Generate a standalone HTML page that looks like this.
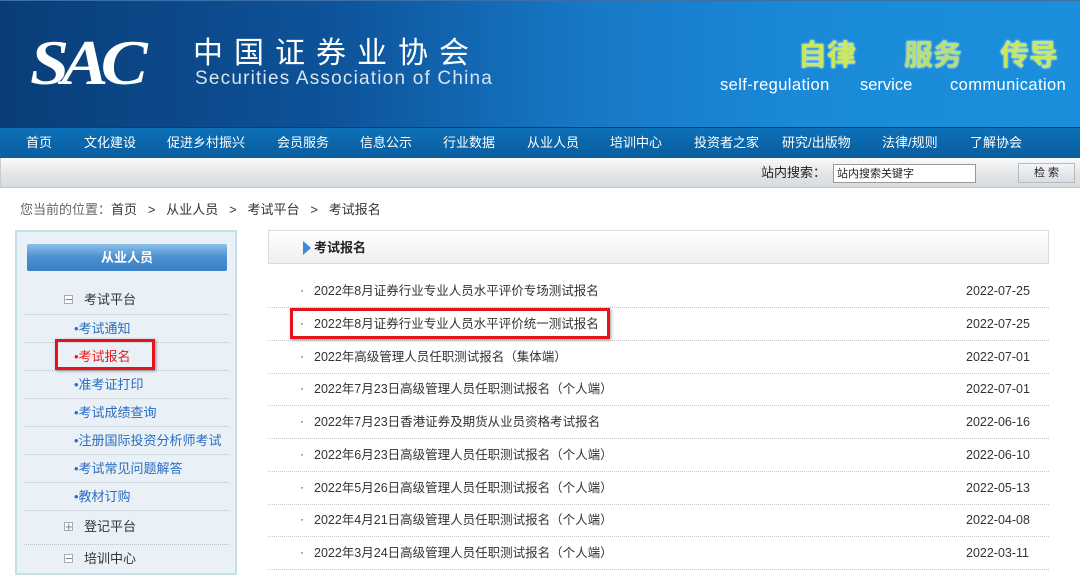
<!DOCTYPE html>
<html><head><meta charset="utf-8"><style>
*{margin:0;padding:0;box-sizing:border-box}
body{width:1080px;height:569px;overflow:hidden;background:#fff;font-family:"Liberation Sans","Noto Sans CJK SC",sans-serif;font-size:13px;color:#333;position:relative;line-height:1}
.hd{position:absolute;left:0;top:0;width:1080px;height:127px;background:linear-gradient(90deg,#0a3d78 0%,#0d5298 30%,#1779c8 55%,#1a8ad8 75%,#1b8fdc 100%);border-top:1px solid #3a6fa8}
.nav{position:absolute;left:0;top:127px;width:1080px;height:31px;background:linear-gradient(#0e70b8,#0a64a8 60%,#0b5fa0);border-top:1px solid #133c66}
.nav span{position:absolute;top:8px;color:#fff;font-size:13px}
.sb{position:absolute;left:0;top:158px;width:1080px;height:30px;background:linear-gradient(#fbfbfb,#e4e6e8 50%,#d9dcdf);border-bottom:1px solid #c0c4c8;border-left:1px solid #ccc}
.abs{position:absolute}
.side{position:absolute;left:15px;top:230px;width:222px;height:345px;background:#eaf1f6;border:2px solid #c5dfe9}
.side .btn{position:absolute;left:10px;top:12px;width:200px;height:27px;background:linear-gradient(#8cc0ea,#4a8fd0 50%,#3a80c4);border-radius:2px;color:#fff;font-weight:bold;text-align:center;line-height:27px;font-size:13px}
.row{position:absolute;left:7px;width:205px;border-bottom:1px dotted #b8c2c8;height:28px}
.row span{position:absolute;top:7px;font-size:13px}
.lk{color:#2a6cc0}
.pm{position:absolute;width:9px;height:9px;border:1px solid #aab;font-size:8px;line-height:7px;text-align:center;color:#777;background:#fff}
.ct{position:absolute;left:268px;top:230px;width:781px;height:34px;background:linear-gradient(#fff,#eef0f1);border:1px solid #dcdcdc}
.li{position:absolute;left:268px;width:781px;height:33px;border-bottom:1px dotted #c8c8c8}
.li .t{position:absolute;left:46px;top:10px;font-size:12.5px;color:#333;line-height:13px}
.li .d{position:absolute;left:698px;top:10px;font-size:12.5px;color:#333;line-height:13px}
.li .b{position:absolute;left:32px;top:9px;font-size:12px;line-height:13px}
.red{position:absolute;border:3px solid #e8121a;box-shadow:1px 1px 3px rgba(0,0,0,.4)}
</style></head><body>
<div class="hd">
<div class="abs" style="left:30px;top:30px;font-family:'Liberation Serif',serif;font-style:italic;font-weight:bold;font-size:64px;color:#fff;letter-spacing:-7px;transform:scaleX(1.1);transform-origin:left">SAC</div>
<div class="abs" style="left:193px;top:34px;font-size:30px;color:#fff;letter-spacing:11px;font-family:'Noto Sans CJK SC',sans-serif">中国证券业协会</div>
<div class="abs" style="left:195px;top:68px;font-size:19px;color:#d8e4f0;letter-spacing:1.2px">Securities Association of China</div>
<div class="abs" style="left:798px;top:38px;font-size:29px;color:#c8e860;font-weight:bold;font-family:'Noto Sans CJK SC',sans-serif;text-shadow:0 0 2px #fff">自律</div>
<div class="abs" style="left:904px;top:38px;font-size:29px;color:#b8e070;font-weight:bold;font-family:'Noto Sans CJK SC',sans-serif;text-shadow:0 0 2px #fff">服务</div>
<div class="abs" style="left:1000px;top:38px;font-size:29px;color:#c8e860;font-weight:bold;font-family:'Noto Sans CJK SC',sans-serif;text-shadow:0 0 2px #fff">传导</div>
<div class="abs" style="left:720px;top:76px;font-size:16.5px;color:#fff;letter-spacing:.4px">self-regulation</div>
<div class="abs" style="left:860px;top:76px;font-size:16.5px;color:#fff">service</div>
<div class="abs" style="left:950px;top:76px;font-size:16.5px;color:#fff;letter-spacing:.4px">communication</div>
</div>
<div class="nav">
<span style="left:26px">首页</span><span style="left:84px">文化建设</span><span style="left:167px">促进乡村振兴</span><span style="left:277px">会员服务</span><span style="left:360px">信息公示</span><span style="left:443px">行业数据</span><span style="left:527px">从业人员</span><span style="left:610px">培训中心</span><span style="left:694px">投资者之家</span><span style="left:782px">研究/出版物</span><span style="left:882px">法律/规则</span><span style="left:970px">了解协会</span>
</div>
<div class="sb">
<span class="abs" style="left:760px;top:8px;font-size:13px;color:#222">站内搜索：</span>
<div class="abs" style="left:832px;top:6px;width:143px;height:19px;background:#fff;border:1px solid #999;font-size:11px;padding:4px 3px;color:#222">站内搜索关键字</div>
<div class="abs" style="left:1017px;top:5px;width:57px;height:20px;background:linear-gradient(#f4f6f8,#d8dde2);border:1px solid #b4bcc4;font-size:11px;text-align:center;line-height:18px;color:#222">检 索</div>
</div>
<div class="abs" style="left:20px;top:203px;font-size:13px;color:#666">您当前的位置：<span style="color:#333">首页 &nbsp; &gt; &nbsp; 从业人员 &nbsp; &gt; &nbsp; 考试平台 &nbsp; &gt; &nbsp; 考试报名</span></div>
<div class="side">
<div class="btn">从业人员</div>
<div class="row" style="top:53px;height:30px"><span class="pm" style="left:40px;top:10px">−</span><span style="left:60px;top:8px;color:#333">考试平台</span></div>
<div class="row" style="top:83px"><span class="lk" style="left:50px">•考试通知</span></div>
<div class="row" style="top:111px"><span style="left:50px;color:#e81818">•考试报名</span></div>
<div class="row" style="top:139px"><span class="lk" style="left:50px">•准考证打印</span></div>
<div class="row" style="top:167px"><span class="lk" style="left:50px">•考试成绩查询</span></div>
<div class="row" style="top:195px"><span class="lk" style="left:50px">•注册国际投资分析师考试</span></div>
<div class="row" style="top:223px"><span class="lk" style="left:50px">•考试常见问题解答</span></div>
<div class="row" style="top:251px"><span class="lk" style="left:50px">•教材订购</span></div>
<div class="row" style="top:279px;height:34px"><span class="pm" style="left:40px;top:11px">+</span><span style="left:60px;top:9px;color:#333">登记平台</span></div>
<div class="row" style="top:313px;height:34px;border:none"><span class="pm" style="left:40px;top:9px">−</span><span style="left:60px;top:7px;color:#333">培训中心</span></div>
</div>
<div class="red" style="left:55px;top:339px;width:100px;height:31px"></div>
<div class="ct"><svg class="abs" style="left:33px;top:9px" width="10" height="16"><path d="M1 1 L9 8 L1 15Z" fill="#3a8ad8"/></svg><span class="abs" style="left:45px;top:10px;font-weight:bold;font-size:13px;color:#222">考试报名</span></div>
<div class="li" style="top:275px"><span class="b">·</span><span class="t">2022年8月证券行业专业人员水平评价专场测试报名</span><span class="d">2022-07-25</span></div>
<div class="li" style="top:308px"><span class="b">·</span><span class="t">2022年8月证券行业专业人员水平评价统一测试报名</span><span class="d">2022-07-25</span></div>
<div class="li" style="top:341px"><span class="b">·</span><span class="t">2022年高级管理人员任职测试报名（集体端）</span><span class="d">2022-07-01</span></div>
<div class="li" style="top:373px"><span class="b">·</span><span class="t">2022年7月23日高级管理人员任职测试报名（个人端）</span><span class="d">2022-07-01</span></div>
<div class="li" style="top:406px"><span class="b">·</span><span class="t">2022年7月23日香港证券及期货从业员资格考试报名</span><span class="d">2022-06-16</span></div>
<div class="li" style="top:439px"><span class="b">·</span><span class="t">2022年6月23日高级管理人员任职测试报名（个人端）</span><span class="d">2022-06-10</span></div>
<div class="li" style="top:472px"><span class="b">·</span><span class="t">2022年5月26日高级管理人员任职测试报名（个人端）</span><span class="d">2022-05-13</span></div>
<div class="li" style="top:504px"><span class="b">·</span><span class="t">2022年4月21日高级管理人员任职测试报名（个人端）</span><span class="d">2022-04-08</span></div>
<div class="li" style="top:537px"><span class="b">·</span><span class="t">2022年3月24日高级管理人员任职测试报名（个人端）</span><span class="d">2022-03-11</span></div>
<div class="red" style="left:290px;top:308px;width:320px;height:31px"></div>
</body></html>
